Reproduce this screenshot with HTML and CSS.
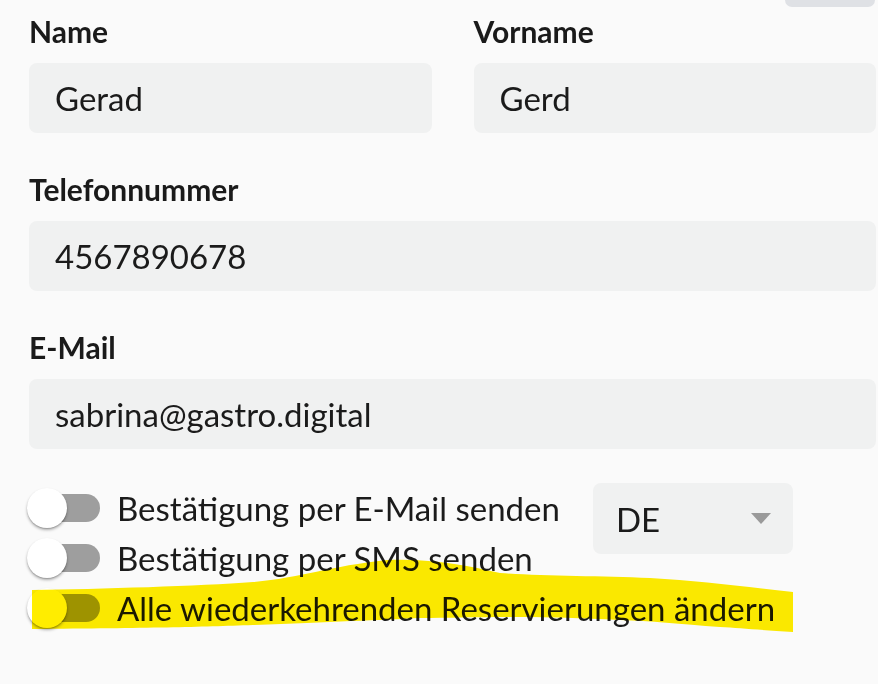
FILE: index.html
```html
<!DOCTYPE html>
<html lang="de">
<head>
    <meta charset="UTF-8">
    <meta name="viewport" content="width=device-width, initial-scale=1.0">
    <title>Reservierung bearbeiten</title>
    <link rel="stylesheet" href="styles.css">
</head>
<body>
    <div class="page">
        <div class="topbar">
            <div class="tab"></div>
        </div>

        <form class="fields" id="guestForm">
            <div class="row-2">
                <div class="field">
                    <label for="name">Name</label>
                    <input type="text" id="name" name="name" value="Gerad">
                </div>
                <div class="field">
                    <label for="vorname">Vorname</label>
                    <input type="text" id="vorname" name="vorname" value="Gerd">
                </div>
            </div>

            <div class="field">
                <label for="phone">Telefonnummer</label>
                <input type="text" id="phone" name="phone" value="4567890678">
            </div>

            <div class="field">
                <label for="email">E-Mail</label>
                <input type="text" id="email" name="email" value="sabrina@gastro.digital">
            </div>

            <div class="options">
                <div class="options-top">
                    <div class="toggles">
                        <label class="toggle">
                            <input type="checkbox" name="confirmMail">
                            <span class="switch"><span class="track"></span><span class="knob"></span></span>
                            <span>Bestätigung per E-Mail senden</span>
                        </label>
                        <label class="toggle">
                            <input type="checkbox" name="confirmSms">
                            <span class="switch"><span class="track"></span><span class="knob"></span></span>
                            <span>Bestätigung per SMS senden</span>
                        </label>
                    </div>
                    <div class="select">
                        <span>DE</span>
                        <svg width="20" height="11" viewBox="0 0 20 11"><polygon points="0,0 20,0 10,11" fill="#9a9a9a"/></svg>
                    </div>
                </div>
                <label class="toggle">
                    <input type="checkbox" name="allRecurring">
                    <span class="switch"><span class="track"></span><span class="knob"></span></span>
                    <span>Alle wiederkehrenden Reservierungen ändern</span>
                </label>
            </div>
        </form>

        <!-- Textmarker über der letzten Option -->
        <svg class="marker" viewBox="0 0 878 684" width="878" height="684">
            <path d="M32,590 C100,589 200,586 253,582 C300,578 330,566 387,560 C430,558 470,566 500,573 C540,576 600,576 650,578 C700,581 740,586 793,592 L793,632 C760,630 740,628 720,627 C680,624 650,621 620,620 C580,618 550,617 520,617 C480,617 450,618 420,618 C380,620 330,622 253,625 C200,627 150,628 32,629 Z" fill="#ffed00"/>
        </svg>
    </div>
</body>
</html>
```

FILE: styles.css
```css
body {
    margin: 0;
    background-color: #fafafa;
    font-family: Lato, "Noto Sans", sans-serif;
    color: #1b1b1b;
}

.page {
    position: relative;
    width: 878px;
    height: 684px;
    padding: 0 2px 0 29px;
    box-sizing: border-box;
    overflow: hidden;
}

.topbar {
    display: flex;
    justify-content: flex-end;
    height: 7px;
    margin-right: 1px;
}

.tab {
    width: 90px;
    background-color: #dfe1e5;
    border-radius: 0 0 8px 8px;
}

.fields {
    display: flex;
    flex-direction: column;
    gap: 36px;
    padding-top: 4px;
}

.row-2 {
    display: grid;
    grid-template-columns: minmax(0, 1fr) minmax(0, 1fr);
    gap: 42px;
}

.field {
    display: flex;
    flex-direction: column;
    gap: 12px;
    min-width: 0;
}

.field label {
    display: block;
    height: 40px;
    line-height: 40px;
    font-size: 30px;
    font-weight: 700;
    color: #1a1a1a;
}

.field input {
    width: 100%;
    min-width: 0;
    height: 70px;
    box-sizing: border-box;
    padding: 0 26px;
    border: none;
    border-radius: 8px;
    background-color: #f0f1f1;
    font-family: inherit;
    font-size: 33px;
    color: #1b1b1b;
    outline: none;
}

.options {
    margin-top: -2px;
}

.options-top {
    display: flex;
    align-items: flex-start;
}

.toggles {
    width: 564px;
}

.toggle {
    display: flex;
    align-items: center;
    gap: 17px;
    height: 50px;
    font-size: 33px;
    white-space: nowrap;
    cursor: pointer;
}

.toggle input {
    display: none;
}

.switch {
    position: relative;
    flex: none;
    width: 73px;
    height: 40px;
    margin-left: -2px;
}

.track {
    position: absolute;
    left: 5px;
    top: 6px;
    width: 68px;
    height: 28px;
    border-radius: 14px;
    background-color: #9e9e9e;
}

.knob {
    position: absolute;
    left: 0;
    top: 0;
    width: 40px;
    height: 40px;
    border-radius: 50%;
    background-color: #fff;
    box-shadow: 0 2px 3px rgba(0, 0, 0, 0.3), 0 1px 1px rgba(0, 0, 0, 0.14);
}

.select {
    display: flex;
    align-items: center;
    justify-content: space-between;
    width: 200px;
    height: 71px;
    box-sizing: border-box;
    padding: 0 22px 0 23px;
    border-radius: 8px;
    background-color: #f0f1f1;
    font-size: 33px;
}

.marker {
    position: absolute;
    left: 0;
    top: 0;
    pointer-events: none;
    mix-blend-mode: multiply;
}
```
